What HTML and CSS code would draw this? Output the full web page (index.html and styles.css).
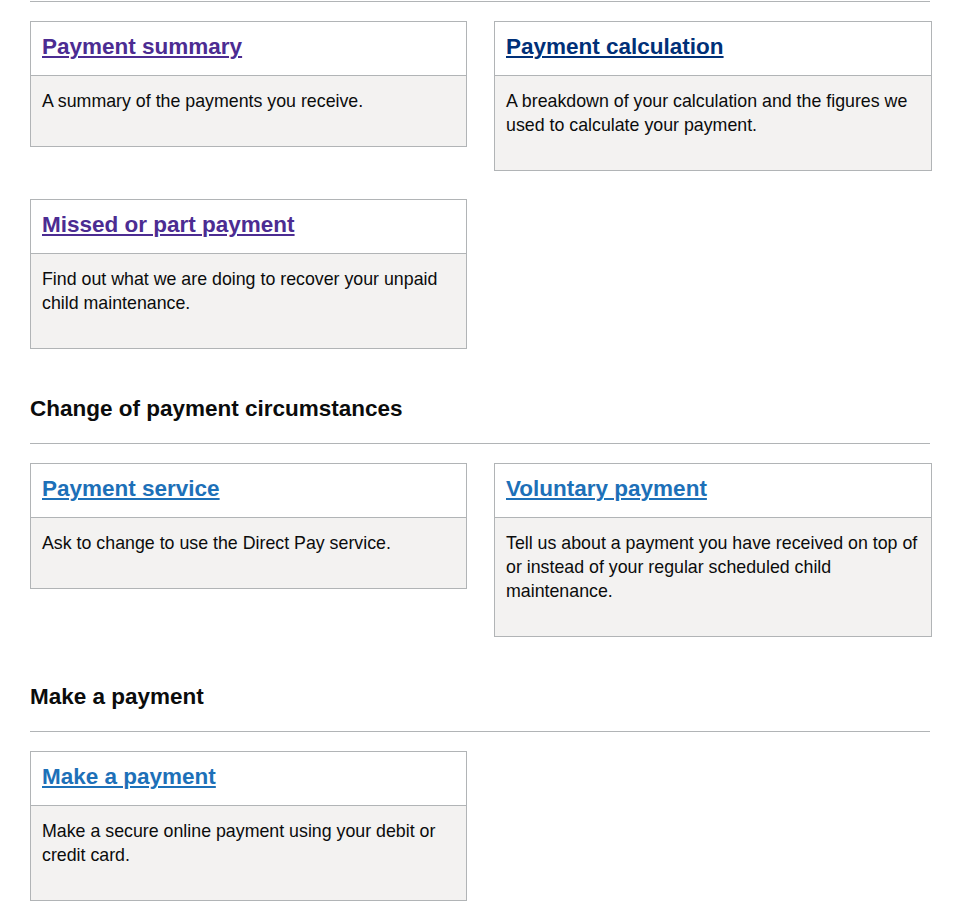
FILE: index.html
```
<!DOCTYPE html>
<html lang="en">
<head>
    <meta charset="UTF-8">
    <meta name="viewport" content="width=device-width, initial-scale=1.0">
    <title>Your payments</title>
    <link rel="stylesheet" href="styles.css">
</head>
<body>
    <div class="page">
        <hr class="section-rule">
        <div class="card-grid">
            <div class="card">
                <div class="card-head"><a href="#" class="visited">Payment summary</a></div>
                <div class="card-body"><p>A summary of the payments you receive.</p></div>
            </div>
            <div class="card">
                <div class="card-head"><a href="#" class="focus">Payment calculation</a></div>
                <div class="card-body"><p>A breakdown of your calculation and the figures we used to calculate your payment.</p></div>
            </div>
            <div class="card">
                <div class="card-head"><a href="#" class="visited">Missed or part payment</a></div>
                <div class="card-body"><p>Find out what we are doing to recover your unpaid child maintenance.</p></div>
            </div>
        </div>

        <h2 class="section-title">Change of payment circumstances</h2>
        <hr class="section-rule">
        <div class="card-grid">
            <div class="card">
                <div class="card-head"><a href="#">Payment service</a></div>
                <div class="card-body"><p>Ask to change to use the Direct Pay service.</p></div>
            </div>
            <div class="card">
                <div class="card-head"><a href="#">Voluntary payment</a></div>
                <div class="card-body"><p>Tell us about a payment you have received on top of or instead of your regular scheduled child maintenance.</p></div>
            </div>
        </div>

        <h2 class="section-title">Make a payment</h2>
        <hr class="section-rule">
        <div class="card-grid">
            <div class="card">
                <div class="card-head"><a href="#">Make a payment</a></div>
                <div class="card-body"><p>Make a secure online payment using your debit or credit card.</p></div>
            </div>
        </div>
    </div>
</body>
</html>
```

FILE: styles.css
```
body {
    margin: 0;
    font-family: "Liberation Sans", Arial, sans-serif;
    color: #0b0c0c;
    background: #fff;
}
.page {
    width: 902px;
    padding: 0 26px 0 30px;
}
.section-rule {
    width: 900px;
    height: 0;
    margin: 1px 0 19px 0;
    border: 0;
    border-top: 1px solid #b1b4b6;
}
.section-title {
    margin: 46px 0 20px 0;
    font-size: 22.5px;
    line-height: 28px;
    font-weight: bold;
}
.section-title + .section-rule {
    margin-top: 0;
}
.card-grid {
    display: grid;
    grid-template-columns: 437px 438px;
    column-gap: 27px;
    row-gap: 28px;
    align-items: start;
}
.card {
    border: 1px solid #b1b4b6;
}
.card-head {
    padding: 10px 11px 14px 11px;
    border-bottom: 1px solid #b1b4b6;
    background: #fff;
    font-size: 22.5px;
    line-height: 29px;
    font-weight: bold;
}
.card-head a {
    color: #1d70b8;
    text-decoration: underline;
    text-decoration-thickness: 2px;
    text-underline-offset: 2px;
}
.card-head a.visited {
    color: #4c2c92;
}
.card-head a.focus {
    color: #003078;
}
.card-body {
    padding: 13px 11px 33px 11px;
    background: #f3f2f1;
    font-size: 17.8px;
    line-height: 24px;
}
.card-body p {
    margin: 0;
}
```
